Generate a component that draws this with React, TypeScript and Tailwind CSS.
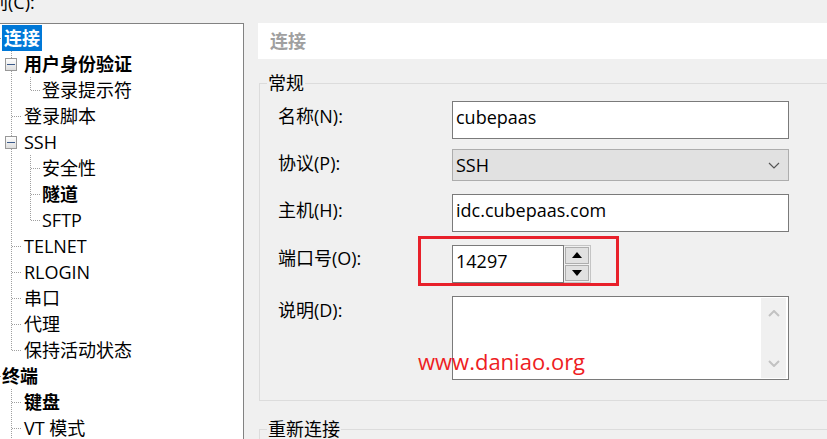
import React from "react";

type Row = {
  label: string;
  level: 0 | 1 | 2;
  bold?: boolean;
  selected?: boolean;
  box?: boolean;
  // connectors drawn in the gutter
  v1?: "full" | "half";
  v2?: "full" | "half";
  v2Below?: boolean;
};

const rows: Row[] = [
  { label: "连接", level: 0, bold: true, selected: true },
  { label: "用户身份验证", level: 1, bold: true, box: true, v1: "full", v2Below: true },
  { label: "登录提示符", level: 2, v1: "full", v2: "half" },
  { label: "登录脚本", level: 1, v1: "full" },
  { label: "SSH", level: 1, box: true, v1: "full", v2Below: true },
  { label: "安全性", level: 2, v1: "full", v2: "full" },
  { label: "隧道", level: 2, bold: true, v1: "full", v2: "full" },
  { label: "SFTP", level: 2, v1: "full", v2: "half" },
  { label: "TELNET", level: 1, v1: "full" },
  { label: "RLOGIN", level: 1, v1: "full" },
  { label: "串口", level: 1, v1: "full" },
  { label: "代理", level: 1, v1: "full" },
  { label: "保持活动状态", level: 1, v1: "half" },
  { label: "终端", level: 0, bold: true },
  { label: "键盘", level: 1, bold: true, v1: "full" },
  { label: "VT 模式", level: 1, v1: "full" },
];

const font = "font-['Open_Sans','Noto_Sans_CJK_SC',sans-serif]";

function Gutter({ row }: { row: Row }) {
  const w = row.level === 0 ? 2 : row.level === 1 ? 24 : 42;
  const dot = { stroke: "#a0a0a0", strokeWidth: 1, strokeDasharray: "1 1" };
  return (
    <svg width={w} height={26} className="shrink-0">
      {row.level === 0 && <line x1={0} y1={13.5} x2={2} y2={13.5} {...dot} />}
      {row.v1 && <line x1={11.5} y1={0} x2={11.5} y2={row.v1 === "full" ? 26 : 13} {...dot} />}
      {row.level === 1 && !row.box && <line x1={12} y1={13.5} x2={22} y2={13.5} {...dot} />}
      {row.v2 && <line x1={30.5} y1={0} x2={30.5} y2={row.v2 === "full" ? 26 : 13} {...dot} />}
      {row.level === 2 && <line x1={31} y1={13.5} x2={40} y2={13.5} {...dot} />}
      {row.v2Below && <line x1={30.5} y1={20} x2={30.5} y2={26} {...dot} />}
      {row.box && (
        <g>
          <defs>
            <linearGradient id="bx" x1="0" y1="0" x2="0" y2="1">
              <stop offset="0" stopColor="#ffffff" />
              <stop offset="1" stopColor="#dcdcdc" />
            </linearGradient>
          </defs>
          <rect x={5.5} y={7.5} width={11} height={12} fill="url(#bx)" stroke="#989898" />
          <line x1={7} y1={13.5} x2={15} y2={13.5} stroke="#3b5a8a" strokeWidth={1} />
        </g>
      )}
    </svg>
  );
}

function Chevron({ up, color, thick }: { up?: boolean; color: string; thick?: boolean }) {
  return (
    <svg width={12} height={7} viewBox="0 0 12 7">
      <polyline
        points={up ? "1,6 6,1 11,6" : "1,1 6,6 11,1"}
        fill="none"
        stroke={color}
        strokeWidth={thick ? 2 : 1.2}
      />
    </svg>
  );
}

function Triangle({ up }: { up?: boolean }) {
  return (
    <svg width={10} height={6} viewBox="0 0 10 6">
      <polygon points={up ? "0,6 5,0 10,6" : "0,0 10,0 5,6"} fill="#000" />
    </svg>
  );
}

export default function App() {
  return (
    <div className={`relative w-[827px] h-[439px] overflow-hidden bg-[#f0f0f0] text-[18px] text-black ${font}`}>
      {/* top caption, cut off by the window */}
      <div className="h-[23px] overflow-hidden">
        <div className="-mt-[10px] -ml-[28px] leading-[24px]">类别(C):</div>
      </div>

      <div className="flex">
        {/* category tree */}
        <div className="-ml-px w-[245px] h-[420px] shrink-0 bg-white border border-[#828282] pt-px">
          {rows.map((row) => (
            <div key={row.label} className="flex h-[26px] items-stretch">
              <Gutter row={row} />
              <span
                className={`leading-[26px] whitespace-nowrap ${row.bold ? "font-bold" : ""} ${
                  row.selected ? "bg-[#0078d7] text-white px-[2px]" : ""
                }`}
              >
                {row.label}
              </span>
            </div>
          ))}
        </div>

        {/* settings panel */}
        <div className="ml-[14px] w-[600px] shrink-0 flex flex-col">
          <div className="h-[36px] bg-white pl-[12px] leading-[36px] font-bold text-[#a0a0a0]">连接</div>

          <fieldset className="mt-[12px] ml-px w-[620px] border-t border-l border-b border-[#dcdcdc] pl-[18px] pb-[20px]">
            <legend className="-ml-[11px] px-px leading-[24px]">常规</legend>

            <div className="flex flex-col gap-[13px] pt-[6px]">
              <div className="flex h-[38px] -mb-[3px]">
                <div className="w-[174px] pt-[3px] leading-[24px]">名称(N):</div>
                <div className="w-[337px] h-[38px] bg-white border border-[#7a7a7a] pl-[3px] pt-[3px] leading-[24px]">
                  cubepaas
                </div>
              </div>

              <div className="flex h-[32px]">
                <div className="w-[174px] pt-[2px] leading-[24px]">协议(P):</div>
                <div className="w-[337px] h-[32px] bg-[#e1e1e1] border border-[#adadad] pl-[3px] pr-[8px] flex items-center justify-between leading-[24px]">
                  <span>SSH</span>
                  <Chevron color="#555555" />
                </div>
              </div>

              <div className="flex h-[38px]">
                <div className="w-[174px] pt-[4px] leading-[24px]">主机(H):</div>
                <div className="w-[337px] h-[38px] bg-white border border-[#7a7a7a] pl-[3px] pt-[3px] leading-[24px]">
                  idc.cubepaas.com
                </div>
              </div>

              <div className="flex h-[38px]">
                <div className="w-[174px] pt-[1px] leading-[24px]">端口号(O):</div>
                <div className="flex">
                  <div className="w-[112px] h-[38px] bg-white border border-[#7a7a7a] pl-[3px] pt-[3px] leading-[24px]">
                    14297
                  </div>
                  <div className="w-[27px] h-[38px] border-y border-r border-[#c4c4c4] bg-[#f0f0f0] flex flex-col gap-[1px] pl-px pr-px py-px">
                    <div className="h-[17px] bg-[#e1e1e1] border border-[#adadad] flex items-center justify-center">
                      <Triangle up />
                    </div>
                    <div className="h-[17px] bg-[#e1e1e1] border border-[#adadad] flex items-center justify-center">
                      <Triangle />
                    </div>
                  </div>
                </div>
              </div>

              <div className="flex h-[84px]">
                <div className="w-[174px] pt-[2px] leading-[24px]">说明(D):</div>
                <div className="w-[337px] h-[84px] bg-white border border-[#7a7a7a] flex justify-end p-px pr-[2px]">
                  <div className="w-[25px] bg-[#f0f0f0] flex flex-col items-center justify-between pt-[12px] pb-[11px]">
                    <Chevron up color="#c2c2c2" thick />
                    <Chevron color="#c2c2c2" thick />
                  </div>
                </div>
              </div>
            </div>
          </fieldset>

          <fieldset className="mt-[16px] ml-px w-[620px] h-[60px] border-t border-l border-[#dcdcdc] pl-[18px]">
            <legend className="-ml-[11px] px-px leading-[24px]">重新连接</legend>
          </fieldset>
        </div>
      </div>

      {/* red annotation box round the port field */}
      <div className="absolute left-[418px] top-[236px] w-[201px] h-[50px] border-[3px] border-[#e8202a]" />

      {/* watermark */}
      <div className="absolute left-[418px] top-[346px] text-[22px] leading-[30px] text-[#ee1d23] font-['Open_Sans',sans-serif]">
        www.daniao.org
      </div>
    </div>
  );
}
